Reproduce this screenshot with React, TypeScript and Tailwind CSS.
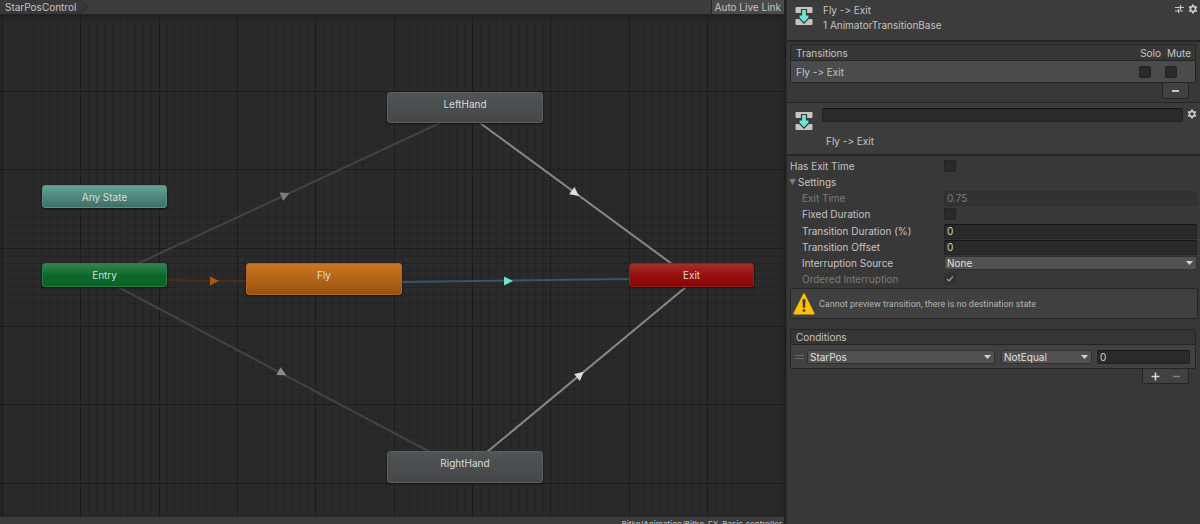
import { useId, useState, type ReactNode } from 'react'

type GraphNode = {
  label: string
  box: string
}

type Edge = {
  from: [number, number]
  to: [number, number]
  arrow: [number, number]
  line: string
  head: string
}

const nodes: GraphNode[] = [
  { label: 'Any State', box: 'left-[42px] top-[170px] w-[125px] h-[23px] border-[#5c8f83] from-[#62a392] to-[#3b7168]' },
  { label: 'Entry', box: 'left-[42px] top-[248px] w-[125px] h-[24px] border-[#2b7d48] from-[#31824f] via-[#0b6b2b] to-[#056226]' },
  { label: 'Fly', box: 'left-[246px] top-[248px] w-[156px] h-[32px] border-[#b06a20] from-[#cc7621] to-[#98520f]' },
  { label: 'Exit', box: 'left-[629px] top-[248px] w-[125px] h-[24px] border-[#8f2320] from-[#a32d28] via-[#950f0f] to-[#8c0505]' },
  { label: 'LeftHand', box: 'left-[387px] top-[77px] w-[156px] h-[31px] border-[#5c5f5f] from-[#4f5456] to-[#464749]' },
  { label: 'RightHand', box: 'left-[387px] top-[436px] w-[156px] h-[32px] border-[#5c5f5f] from-[#4f5456] to-[#464749]' },
]

const edges: Edge[] = [
  { from: [137, 249], to: [440, 108], arrow: [285, 180], line: '#434343', head: '#7d7d7d' },
  { from: [118, 272], to: [430, 437], arrow: [282, 358], line: '#434343', head: '#8a8a8a' },
  { from: [480, 108], to: [672, 249], arrow: [575, 178], line: '#888888', head: '#dcdcdc' },
  { from: [487, 437], to: [686, 272], arrow: [580, 360], line: '#888888', head: '#dcdcdc' },
  { from: [167, 265], to: [246, 266], arrow: [214, 266], line: '#4f2c12', head: '#a85a12' },
  { from: [401, 267], to: [630, 264], arrow: [508, 266], line: '#33576b', head: '#6fe3d3' },
]

const STEP = 7.835

function gridPath(origin: number, count: number, vertical: boolean, major: boolean) {
  let d = ''
  for (let i = -10; i < count; i++) {
    if ((i % 10 === 0) !== major) continue
    const p = Math.round(origin + i * STEP) + 0.5
    d += vertical ? `M${p} 0V2000` : `M0 ${p}H3000`
  }
  return d
}

function Grid() {
  return (
    <g fill="none">
      <path d={gridPath(2, 380, true, false) + gridPath(76, 250, false, false)} stroke="#242424" />
      <path d={gridPath(2, 380, true, true) + gridPath(76, 250, false, true)} stroke="#1c1c1c" />
    </g>
  )
}

function EdgeLine({ edge }: { edge: Edge }) {
  const [x1, y1] = edge.from
  const [x2, y2] = edge.to
  const angle = (Math.atan2(y2 - y1, x2 - x1) * 180) / Math.PI
  return (
    <g>
      <line x1={x1} y1={y1} x2={x2} y2={y2} stroke={edge.line} strokeWidth={2} />
      <path
        d="M5 0L-4 4.5V-4.5Z"
        fill={edge.head}
        transform={`translate(${edge.arrow[0]} ${edge.arrow[1]}) rotate(${angle})`}
      />
    </g>
  )
}

function AnimatorPane() {
  return (
    <section className="flex min-w-0 flex-1 flex-col border-r-2 border-[#202020]">
      <div className="flex h-[15px] shrink-0 items-stretch justify-between border-b border-[#232323] bg-[#3c3c3c]">
        <div className="flex">
          <button className="bg-[#383838] pl-[5px] pr-[4px] leading-[14px]">StarPosControl</button>
          <svg width="9" height="14" viewBox="0 0 9 14">
            <path d="M0 0L7 7L0 14Z" fill="#383838" />
            <path d="M1 0L7.5 7L0 14" fill="none" stroke="#272727" />
          </svg>
        </div>
        <button className="border-l border-[#252525] bg-[#4a4a4a] px-[3px] leading-[14px]">
          Auto Live Link
        </button>
      </div>

      <div className="relative min-h-0 flex-1 overflow-hidden bg-[#2a2a2a] shadow-[inset_0_2px_4px_#1f1f1f]">
        <svg className="absolute inset-0 h-full w-full">
          <Grid />
          {edges.map((edge, i) => (
            <EdgeLine key={i} edge={edge} />
          ))}
        </svg>
        {nodes.map((node) => (
          <button
            key={node.label}
            className={`absolute flex justify-center rounded-[3px] border bg-linear-to-b pt-[4px] leading-[14px] text-[#dcdcdc] shadow-[0_1px_2px_#111] ${node.box}`}
          >
            {node.label}
          </button>
        ))}
      </div>

      <footer className="h-[7px] shrink-0 overflow-hidden bg-[#3c3c3c] pr-[2px] pt-[2px] text-right text-[8px] font-medium leading-[10px] text-[#b8b8b8]">
        Bitko/Animation/Bitko_FX_Basic.controller
      </footer>
    </section>
  )
}

function TransitionIcon() {
  return (
    <svg className="shrink-0" width="18" height="18" viewBox="0 0 18 18" aria-hidden="true">
      <rect x="0.5" y="0" width="17" height="6" rx="1" fill="#c9c4c2" />
      <rect x="0.5" y="12" width="17" height="6" rx="1" fill="#c9c4c2" />
      <path
        d="M6.5 2.5H11.5V8H14V11L9 16.2L4 11V8H6.5Z"
        fill="#6fe3d3"
        stroke="#2f3d3c"
        strokeWidth="1.2"
      />
    </svg>
  )
}

function GearIcon() {
  return (
    <svg width="10" height="10" viewBox="0 0 10 10" aria-hidden="true">
      <g fill="#c8c8c8">
        <rect x="4" y="0.5" width="2" height="9" />
        <rect x="4" y="0.5" width="2" height="9" transform="rotate(60 5 5)" />
        <rect x="4" y="0.5" width="2" height="9" transform="rotate(120 5 5)" />
        <circle cx="5" cy="5" r="3.4" />
      </g>
      <circle cx="5" cy="5" r="1.7" fill="#3c3c3c" />
    </svg>
  )
}

function PresetIcon() {
  return (
    <svg width="9" height="10" viewBox="0 0 9 10" aria-hidden="true">
      <path d="M0 3.5H5M6 3.5H9M5.5 1V6M0 7H3M4 7H8M3.5 5V9" stroke="#c8c8c8" strokeWidth="1.2" fill="none" />
    </svg>
  )
}

function Checkbox({ id, label, ...rest }: { id?: string; label?: string; defaultChecked?: boolean; disabled?: boolean }) {
  return (
    <span className="relative flex h-[12px] w-[12px]">
      <input
        id={id}
        type="checkbox"
        aria-label={label}
        className="peer h-[12px] w-[12px] appearance-none rounded-[2px] border border-[#222] bg-[#2a2a2a] disabled:border-[#303030] disabled:bg-[#323232]"
        {...rest}
      />
      <svg className="pointer-events-none absolute inset-0 hidden peer-checked:block" viewBox="0 0 12 12">
        <path d="M3 6L5 8L9 3.5" fill="none" stroke="#a0a0a0" strokeWidth="1.2" />
      </svg>
    </span>
  )
}

function Dropdown({ id, label, options, className }: { id?: string; label?: string; options: string[]; className: string }) {
  return (
    <span className={`relative flex ${className}`}>
      <select
        id={id}
        aria-label={label}
        className="h-[14px] w-full appearance-none rounded-[2px] border border-[#303030] bg-[#515151] px-[2px] leading-[12px] text-[#e0e0e0]"
      >
        {options.map((o) => (
          <option key={o}>{o}</option>
        ))}
      </select>
      <svg className="pointer-events-none absolute right-[4px] top-[5px]" width="7" height="4" viewBox="0 0 7 4">
        <path d="M0 0H7L3.5 4Z" fill="#d0d0d0" />
      </svg>
    </span>
  )
}

const textInput =
  'min-w-0 rounded-[2px] border border-[#212121] border-t-[#141414] bg-[#2a2a2a] px-[2px] leading-[12px] text-[#d2d2d2] disabled:border-[#303030] disabled:bg-[#313333] disabled:text-[#7c7c7c]'

function Row({ label, indent = true, dim = false, children }: { label: string; indent?: boolean; dim?: boolean; children: (id: string) => ReactNode }) {
  const id = useId()
  return (
    <div className="flex h-[16px] items-center pr-[3px]">
      <label
        htmlFor={id}
        className={`w-[157px] shrink-0 leading-[16px] ${indent ? 'pl-[15px]' : 'pl-[3px]'} ${dim ? 'text-[#7c7c7c]' : ''}`}
      >
        {label}
      </label>
      {children(id)}
    </div>
  )
}

function TransitionList() {
  return (
    <div className="h-[61px] border-b border-[#242424] pl-[3px] pr-[4px] pt-[2px]">
      <div className="flex h-[17px] items-center justify-between rounded-t-[2px] border border-[#242424] bg-[#363636] pl-[5px] pr-[4px]">
        <span>Transitions</span>
        <span className="flex gap-[6px]">
          <span>Solo</span>
          <span>Mute</span>
        </span>
      </div>
      <div className="flex h-[22px] items-center rounded-b-[2px] border border-t-0 border-[#242424] bg-[#494c4b] pl-[5px] pr-[18px]">
        <span className="flex-1">Fly -&gt; Exit</span>
        <span className="flex gap-[14px]">
          <Checkbox label="Solo" />
          <Checkbox label="Mute" />
        </span>
      </div>
      <div className="flex justify-end pr-[7px]">
        <button
          aria-label="Remove transition"
          className="flex h-[16px] w-[27px] items-center justify-center rounded-b-[2px] border border-t-0 border-[#242424] bg-[#414141]"
        >
          <svg width="7" height="2">
            <rect width="7" height="2" fill="#c8c8c8" />
          </svg>
        </button>
      </div>
    </div>
  )
}

function Conditions() {
  return (
    <div className="mt-[10px] pl-[3px] pr-[4px]">
      <div className="flex h-[16px] items-center rounded-t-[2px] border border-[#242424] bg-[#353535] pl-[5px]">
        Conditions
      </div>
      <div className="flex h-[24px] items-center rounded-b-[2px] border border-t-0 border-[#242424] bg-[#414141] pl-[4px] pr-[5px]">
        <svg className="shrink-0" width="9" height="4" viewBox="0 0 9 4">
          <path d="M0 0.5H9M0 3.5H9" stroke="#6a6a6a" />
        </svg>
        <Dropdown label="Parameter" options={['StarPos']} className="ml-[3px] flex-1" />
        <Dropdown label="Comparison" options={['NotEqual', 'Equals', 'Greater', 'Less']} className="ml-[6px] w-[91px]" />
        <input aria-label="Value" defaultValue="0" className={`ml-[5px] h-[14px] w-[93px] ${textInput}`} />
      </div>
      <div className="flex justify-end pr-[7px]">
        <div className="flex h-[15px] w-[47px] items-center justify-around rounded-b-[2px] border border-t-0 border-[#242424] bg-[#414141] px-[2px]">
          <button aria-label="Add condition">
            <svg width="9" height="9" viewBox="0 0 9 9">
              <path d="M0.5 4.5H8.5M4.5 0.5V8.5" stroke="#d6d6d6" strokeWidth="1.6" />
            </svg>
          </button>
          <button aria-label="Remove condition">
            <svg width="7" height="9" viewBox="0 0 7 9">
              <path d="M0 4.5H7" stroke="#808080" strokeWidth="1.4" />
            </svg>
          </button>
        </div>
      </div>
    </div>
  )
}

function Inspector() {
  const [open, setOpen] = useState(true)
  return (
    <aside className="w-[414px] shrink-0 border-l border-[#2c2c2c] bg-[#383838]">
      <header className="flex h-[42px] border-b-2 border-[#262626] bg-[#3c3c3c] pl-[8px] pr-[2px] pt-[3px]">
        <div className="pt-[4px]">
          <TransitionIcon />
        </div>
        <div className="flex-1 pl-[10px] leading-[15px]">
          <p>Fly -&gt; Exit</p>
          <p>1 AnimatorTransitionBase</p>
        </div>
        <div className="flex items-start gap-[4px] pt-px">
          <button aria-label="Presets">
            <PresetIcon />
          </button>
          <button aria-label="Options">
            <GearIcon />
          </button>
        </div>
      </header>

      <TransitionList />

      <div className="flex h-[53px] border-b-2 border-[#262626] bg-[#3c3c3c] pl-[8px] pr-[3px] pt-[5px]">
        <div className="pt-[4px]">
          <TransitionIcon />
        </div>
        <div className="flex min-w-0 flex-1 flex-col pl-[9px]">
          <input aria-label="Transition name" className={`h-[14px] ${textInput}`} />
          <p className="pl-[4px] pt-[12px] leading-[15px]">Fly -&gt; Exit</p>
        </div>
        <button aria-label="Options" className="ml-[4px] h-[10px] pt-px">
          <GearIcon />
        </button>
      </div>

      <div className="pt-[2px]">
        <Row label="Has Exit Time" indent={false}>
          {(id) => <Checkbox id={id} />}
        </Row>
        <button className="flex h-[16px] items-center pl-[2px]" aria-expanded={open} onClick={() => setOpen(!open)}>
          <svg width="7" height="6" viewBox="0 0 7 6">
            <path d="M0 0H7L3.5 6Z" fill="#7a7a7a" />
          </svg>
          <span className="pl-[2px]">Settings</span>
        </button>
        {open && (
          <>
            <Row label="Exit Time" dim>
              {(id) => <input id={id} defaultValue="0.75" disabled className={`h-[15px] flex-1 ${textInput}`} />}
            </Row>
            <Row label="Fixed Duration">{(id) => <Checkbox id={id} />}</Row>
            <div className="pt-px">
              <Row label="Transition Duration (%)">
                {(id) => <input id={id} defaultValue="0" className={`h-[15px] flex-1 ${textInput}`} />}
              </Row>
              <Row label="Transition Offset">
                {(id) => <input id={id} defaultValue="0" className={`h-[15px] flex-1 ${textInput}`} />}
              </Row>
              <Row label="Interruption Source">
                {(id) => <Dropdown id={id} options={['None', 'Current State', 'Next State']} className="flex-1" />}
              </Row>
              <Row label="Ordered Interruption" dim>
                {(id) => <Checkbox id={id} defaultChecked disabled />}
              </Row>
            </div>
          </>
        )}
      </div>

      <div className="ml-[3px] mr-[2px] mt-px flex h-[31px] items-center rounded-[2px] border border-[#242424] bg-[#404040] pl-[2px]">
        <svg width="22" height="22" viewBox="0 0 22 22" aria-hidden="true">
          <path d="M11 1.2L20.8 20.6H1.2Z" fill="#ffc107" stroke="#ffc107" strokeWidth="1.6" strokeLinejoin="round" />
          <path d="M9.8 6.5H12.2L11.8 14.5H10.2Z" fill="#3a3a3a" stroke="#3a3a3a" strokeWidth="0.6" />
          <circle cx="11" cy="17.6" r="1.4" fill="#3a3a3a" />
        </svg>
        <p className="pl-[4px] font-['Roboto',sans-serif] text-[9px] text-[#b4b4b4]">
          Cannot preview transition, there is no destination state
        </p>
      </div>

      <Conditions />
    </aside>
  )
}

export default function App() {
  return (
    <main className="flex h-screen overflow-hidden bg-[#383838] font-['Inter',sans-serif] text-[10px] leading-[14px] text-[#c4c4c4] [font-feature-settings:'calt'_0]">
      <AnimatorPane />
      <Inspector />
    </main>
  )
}
